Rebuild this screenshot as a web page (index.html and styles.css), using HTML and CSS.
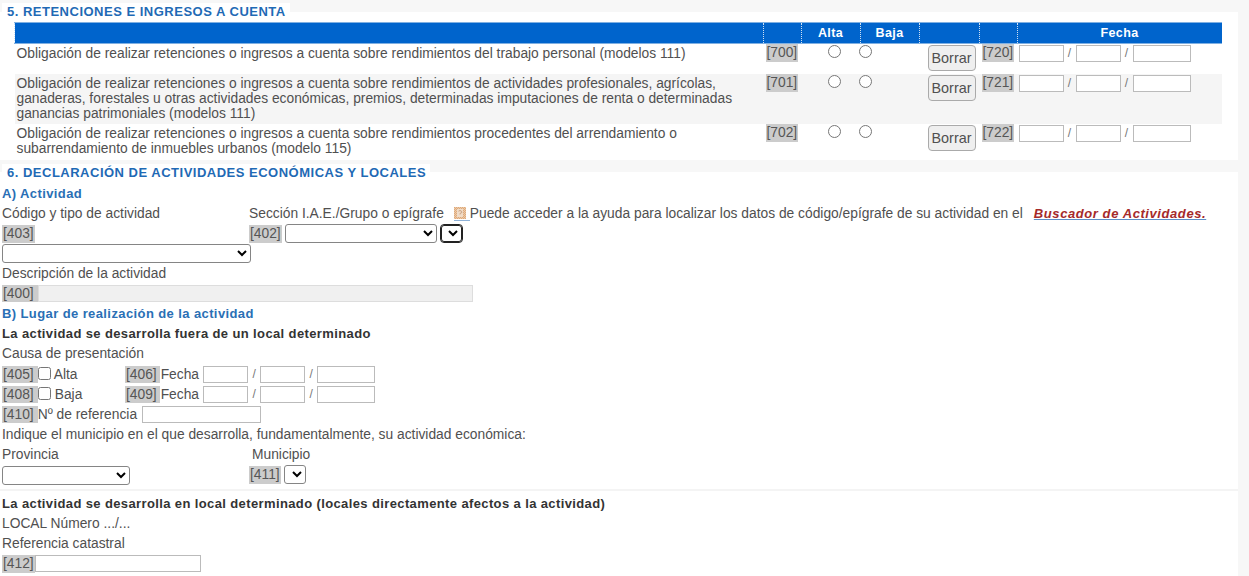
FILE: index.html
```html
<!DOCTYPE html>
<html lang="es">
<head>
<meta charset="utf-8">
<title>Declaración</title>
<link rel="stylesheet" href="styles.css">
</head>
<body>
<section class="panel panel-5">
  <h2 class="legend legend-5">5. RETENCIONES E INGRESOS A CUENTA</h2>
  <table class="grid">
    <colgroup>
      <col class="c-desc"><col class="c-code"><col class="c-radio"><col class="c-radio2"><col class="c-btn"><col class="c-code2"><col>
    </colgroup>
    <thead>
      <tr><th></th><th></th><th>Alta</th><th>Baja</th><th></th><th></th><th>Fecha</th></tr>
    </thead>
    <tbody>
      <tr class="r1">
        <td>Obligación de realizar retenciones o ingresos a cuenta sobre rendimientos del trabajo personal (modelos 111)</td>
        <td class="t-code"><span class="code">[700]</span></td>
        <td class="t-alta"><input type="radio" name="a"></td>
        <td class="t-baja"><input type="radio" name="a"></td>
        <td class="t-btn"><button type="button">Borrar</button></td>
        <td class="t-code"><span class="code">[720]</span></td>
        <td class="t-date"><span class="date"><input class="d1"><span class="sl">/</span><input class="d1"><span class="sl">/</span><input class="d2"></span></td>
      </tr>
      <tr class="r2 alt">
        <td>Obligación de realizar retenciones o ingresos a cuenta sobre rendimientos de actividades profesionales, agrícolas, ganaderas, forestales u otras actividades económicas, premios, determinadas imputaciones de renta o determinadas ganancias patrimoniales (modelos 111)</td>
        <td class="t-code"><span class="code">[701]</span></td>
        <td class="t-alta"><input type="radio" name="b"></td>
        <td class="t-baja"><input type="radio" name="b"></td>
        <td class="t-btn"><button type="button">Borrar</button></td>
        <td class="t-code"><span class="code">[721]</span></td>
        <td class="t-date"><span class="date"><input class="d1"><span class="sl">/</span><input class="d1"><span class="sl">/</span><input class="d2"></span></td>
      </tr>
      <tr class="r3">
        <td>Obligación de realizar retenciones o ingresos a cuenta sobre rendimientos procedentes del arrendamiento o subarrendamiento de inmuebles urbanos (modelo 115)</td>
        <td class="t-code"><span class="code">[702]</span></td>
        <td class="t-alta"><input type="radio" name="c"></td>
        <td class="t-baja"><input type="radio" name="c"></td>
        <td class="t-btn"><button type="button">Borrar</button></td>
        <td class="t-code"><span class="code">[722]</span></td>
        <td class="t-date"><span class="date"><input class="d1"><span class="sl">/</span><input class="d1"><span class="sl">/</span><input class="d2"></span></td>
      </tr>
    </tbody>
  </table>
</section>
<section class="panel panel-6">
  <h2 class="legend legend-6">6. DECLARACIÓN DE ACTIVIDADES ECONÓMICAS Y LOCALES</h2>
  <div class="row sub">A) Actividad</div>
  <div class="row">
    <div class="col-a">Código y tipo de actividad</div>
    <div>Sección I.A.E./Grupo o epígrafe</div>
    <a class="help" href="#">
      <svg width="12" height="12" viewBox="0 0 12 12">
        <defs><pattern id="dither" width="2" height="2" patternUnits="userSpaceOnUse"><rect width="2" height="2" fill="#eccbaa"/><rect width="1" height="1" fill="#dfa97a"/><rect x="1" y="1" width="1" height="1" fill="#dfa97a"/></pattern></defs>
        <rect width="12" height="12" fill="url(#dither)"/>
        <rect x="3" y="2" width="6" height="8" fill="#f0dcc8"/>
        <path d="M4.5 4.2q1.5-1.4 3 0t-1.5 2.3v1" fill="none" stroke="#c9a283"/>
      </svg>
    </a>
    <div>Puede acceder a la ayuda para localizar los datos de código/epígrafe de su actividad en el</div>
    <a class="link" href="#">Buscador de Actividades.</a>
  </div>
  <div class="row">
    <div class="col-a"><span class="code">[403]</span></div>
    <span class="code">[402]</span>
    <select class="s-sec"></select>
    <select class="s-mini"></select>
  </div>
  <div class="row"><select class="s-code"></select></div>
  <div class="row">Descripción de la actividad</div>
  <div class="row"><span class="code code-w">[400]</span><input class="i-desc" readonly></div>
  <div class="row sub">B) Lugar de realización de la actividad</div>
  <div class="row strong">La actividad se desarrolla fuera de un local determinado</div>
  <div class="row row-causa">Causa de presentación</div>
  <div class="row">
    <div class="col-b"><span class="code code-w">[405]</span><input type="checkbox" class="chk"><span>Alta</span></div>
    <span class="code code-x">[406]</span><span class="lab">Fecha</span>
    <span class="date"><input class="d1"><span class="sl">/</span><input class="d1"><span class="sl">/</span><input class="d2"></span>
  </div>
  <div class="row">
    <div class="col-b"><span class="code code-w">[408]</span><input type="checkbox" class="chk"><span class="baja">Baja</span></div>
    <span class="code code-x">[409]</span><span class="lab">Fecha</span>
    <span class="date"><input class="d1"><span class="sl">/</span><input class="d1"><span class="sl">/</span><input class="d2"></span>
  </div>
  <div class="row"><span class="code code-w">[410]</span><span class="ref-lab">Nº de referencia</span><input class="i-ref"></div>
  <div class="row">Indique el municipio en el que desarrolla, fundamentalmente, su actividad económica:</div>
  <div class="row">
    <div class="col-a">Provincia</div>
    <div class="muni">Municipio</div>
  </div>
  <div class="row">
    <div class="col-a"><select class="s-prov"></select></div>
    <span class="code">[411]</span>
    <select class="s-muni"></select>
  </div>
  <hr class="sep">
  <div class="row strong">La actividad se desarrolla en local determinado (locales directamente afectos a la actividad)</div>
  <div class="row">LOCAL Número .../...</div>
  <div class="row">Referencia catastral</div>
  <div class="row"><span class="code">[412]</span><input class="i-cat"></div>
</section>
</body>
</html>
```

FILE: styles.css
```css
* { box-sizing: border-box; }
html, body { margin: 0; padding: 0; }
body {
  width: 1249px;
  height: 576px;
  overflow: hidden;
  background: #f7f7f7;
  color: #505050;
  font: 13.8px/15px "Liberation Sans", Arial, sans-serif;
}
.panel { background: #fff; width: 1238px; position: relative; }
.panel-5 { margin-top: 12px; height: 148px; padding: 10px 16px 0 14px; }
.panel-6 { margin-top: 12px; height: 404px; padding: 13px 0 0 2px; }
.legend {
  position: absolute;
  left: 2px;
  margin: 0;
  padding: 0 4px 0 5px;
  height: 17px;
  background: #fff;
  color: #1f6ab5;
  font: bold 13px/17px "Liberation Sans", Arial, sans-serif;
  letter-spacing: .5px;
}
.legend-5 { top: -9px; }
.legend-6 { top: -8px; }
.grid { border-collapse: collapse; table-layout: fixed; width: 1208px; }
.c-desc { width: 749px; }
.c-code { width: 38px; }
.c-radio { width: 59px; }
.c-radio2 { width: 59px; }
.c-btn { width: 60px; }
.c-code2 { width: 38px; }
.grid th {
  height: 20px;
  padding: 0 1px 0 0;
  background: #0064cc;
  color: #fff;
  font: bold 12.5px/20px "Liberation Sans", Arial, sans-serif;
  letter-spacing: .4px;
  border-left: 1px dotted #cfe0f2;
  border-top: 1px solid #7fb0e2;
  border-bottom: 1px solid #7fb0e2;
}
.grid td { padding: 2px 2px 0; vertical-align: top; }
.grid .r1 td { height: 30px; }
.grid .r2 td { height: 50px; }
.grid .r3 td { height: 37px; }
.grid .alt td { background: #f5f5f5; }
.grid .t-code { padding: 0 0 0 2px; }
.grid .t-alta { padding: 1px 0 0 26px; }
.grid .t-baja { padding: 1px 0 0 0; }
.t-baja input { margin-left: -2px !important; }
.grid .t-btn { padding: 1px 0 0 8px; }
.grid .t-date { padding: 1px 0 0 1px; }
.code { display: inline-block; flex: none; height: 18px; padding: 0 1px; background: #ccc; color: #555; line-height: 17px; }
.code-w { padding-right: 4px; height: 17px; }
.code-x { padding-right: 3px; height: 17px; }
input, select, button { font: 12px "Liberation Sans", Arial, sans-serif; margin: 0; }
input[type=radio] { width: 13px; height: 13px; margin: 0; display: block; accent-color: #777; }
button {
  display: block;
  width: 48px;
  height: 26px;
  padding: 0;
  font-size: 14.4px;
  color: #505050;
  background: #efefef;
  border: 1px solid #aaa;
  border-radius: 4px;
}
input:not([type]) { display: block; height: 17px; padding: 0; border: 1px solid #bbb; background: #fff; }
.date { display: flex; align-items: flex-start; color: #777; white-space: nowrap; }
.sl { width: 12px; text-align: center; font-size: 12px; line-height: 17px; }
.d1 { width: 45px; }
.d2 { width: 58px; }
.row { display: flex; align-items: flex-start; height: 20px; line-height: 17px; white-space: nowrap; }
.row-causa { height: 21px; }
.sub { color: #2a6fb5; font: bold 13px/17px "Liberation Sans", Arial, sans-serif; letter-spacing: .4px; }
.strong { color: #333; font: bold 13px/17px "Liberation Sans", Arial, sans-serif; letter-spacing: .38px; }
.col-a { width: 247px; flex: none; }
.col-b { width: 123px; flex: none; display: flex; align-items: flex-start; }
.help { display: block; flex: none; width: 16px; height: 14px; margin: 2px 0 0 10px; border-bottom: 1px solid #8fb2d8; }
.help svg { display: block; }
.link { margin-left: 11px; color: #a52a2a; font: italic bold 13px/17px "Liberation Sans", Arial, sans-serif; letter-spacing: .58px; text-decoration-color: #5b8fc7; }
select { height: 19px; background: #fff; border: 1px solid #858585; border-radius: 3px; margin-top: -1px; }
.s-sec { width: 152px; margin-left: 3px; }
.s-mini { width: 21px; height: 17px; margin: 0 0 0 4px; outline: 1px solid #222; border-color: #222; }
.s-code { width: 249px; }
.i-desc { width: 435px; background: #f0f0f0 !important; border-color: #ddd !important; }
.chk { width: 13px; height: 13px; margin: 1px 3px 0 0; flex: none; }
.baja { margin-left: 1px; }
.lab { margin: 0 4px 0 1px; }
.ref-lab { margin-right: 5px; }
.i-ref { width: 119px; }
.i-cat { width: 166px; }
.muni { margin-left: 3px; }
.s-prov { width: 128px; }
.s-muni { width: 22px; margin-left: 3px; }
.sep { margin: 3px 0 4px -2px; height: 2px; border: 0; background: #f4f4f4; }
```
